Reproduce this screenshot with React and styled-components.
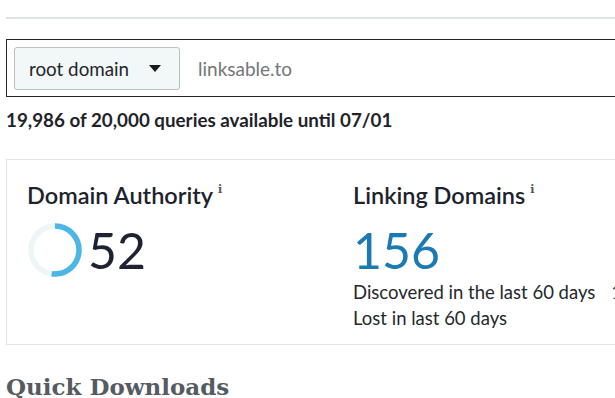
import React from "react";
import styled, { createGlobalStyle } from "styled-components";

const GlobalStyle = createGlobalStyle`
  html, body {
    margin: 0;
    padding: 0;
    background: #ffffff;
    overflow: hidden;
  }
  body {
    font-family: Lato, "Liberation Sans", sans-serif;
    color: #1f2633;
  }
`;

const Page = styled.div`
  width: 615px;
  height: 398px;
  overflow: hidden;
  padding: 17px 0 0 6px;
  box-sizing: border-box;
`;

const Rule = styled.div`
  height: 2px;
  background: #dfe4e4;
  margin-bottom: 20px;
`;

const SearchBar = styled.div`
  display: flex;
  align-items: center;
  gap: 18px;
  width: 640px;
  height: 58px;
  padding: 0 7px;
  box-sizing: border-box;
  border: 1px solid #222426;
`;

const Select = styled.div`
  display: flex;
  align-items: center;
  justify-content: space-between;
  width: 166px;
  height: 43px;
  padding: 0 18px 0 14px;
  box-sizing: border-box;
  background: #f2f7f7;
  border: 1px solid #b9bfc2;
  border-radius: 3px;
  font-size: 18.8px;
  color: #23262b;
`;

const Caret = styled.span`
  width: 0;
  height: 0;
  border-left: 6px solid transparent;
  border-right: 6px solid transparent;
  border-top: 7px solid #1a1a1a;
`;

const Query = styled.span`
  font-size: 19px;
  color: #737679;
`;

const Quota = styled.p`
  margin: 11px 0 0;
  font-size: 18.8px;
  font-weight: 700;
  color: #1f2329;
`;

const Card = styled.div`
  display: grid;
  grid-template-columns: 326px 1fr;
  width: 640px;
  height: 186px;
  margin-top: 28px;
  padding: 21px 0 0 20px;
  box-sizing: border-box;
  border: 1px solid #dfe4e4;
`;

const Metric = styled.div`
  display: flex;
  flex-direction: column;
`;

const Title = styled.h3`
  margin: 0;
  font-size: 23.5px;
  font-weight: 600;
  color: #1d232c;
  white-space: nowrap;
`;

const Info = styled.sup`
  font-family: "DejaVu Serif", serif;
  font-size: 11px;
  font-weight: 700;
  color: #555;
  margin-left: 5px;
  vertical-align: 11px;
  line-height: 0;
`;

const ValueRow = styled.div`
  display: flex;
  align-items: center;
  gap: 5px;
  height: 56px;
  margin-top: 13px;
`;

const Value = styled.span`
  font-size: 50px;
  font-weight: 400;
  line-height: 1;
  color: ${(p) => p.color || "#1f2233"};
`;

const Notes = styled.div`
  margin-top: 1px;
`;

const Note = styled.div`
  display: flex;
  white-space: nowrap;
  font-size: 18.5px;
  color: #24282e;
  line-height: 26px;
`;

const Extra = styled.span`
  margin-left: 16px;
  color: #444;
`;

const Heading = styled.h2`
  margin: 28px 0 0;
  font-family: "DejaVu Serif", "Liberation Serif", serif;
  font-size: 23px;
  font-weight: 700;
  color: #555b61;
`;

function Donut({ value }) {
  const r = 24;
  const c = 2 * Math.PI * r;
  return (
    <svg width="56" height="56" viewBox="0 0 56 56">
      <circle cx="28" cy="28" r={r} fill="none" stroke="#eef5f6" strokeWidth="5.5" />
      <circle
        cx="28"
        cy="28"
        r={r}
        fill="none"
        stroke="#4cb6e5"
        strokeWidth="5.5"
        strokeDasharray={`${(c * value) / 100} ${c}`}
        transform="rotate(-90 28 28)"
      />
    </svg>
  );
}

export default function App() {
  return (
    <Page>
      <GlobalStyle />
      <Rule />
      <SearchBar>
        <Select>
          root domain
          <Caret />
        </Select>
        <Query>linksable.to</Query>
      </SearchBar>
      <Quota>19,986 of 20,000 queries available until 07/01</Quota>
      <Card>
        <Metric>
          <Title>
            Domain Authority<Info>i</Info>
          </Title>
          <ValueRow>
            <Donut value={52} />
            <Value>52</Value>
          </ValueRow>
        </Metric>
        <Metric>
          <Title>
            Linking Domains<Info>i</Info>
          </Title>
          <ValueRow>
            <Value color="#1b7ab3">156</Value>
          </ValueRow>
          <Notes>
            <Note>
              Discovered in the last 60 days<Extra>1</Extra>
            </Note>
            <Note>Lost in last 60 days</Note>
          </Notes>
        </Metric>
      </Card>
      <Heading>Quick Downloads</Heading>
    </Page>
  );
}
